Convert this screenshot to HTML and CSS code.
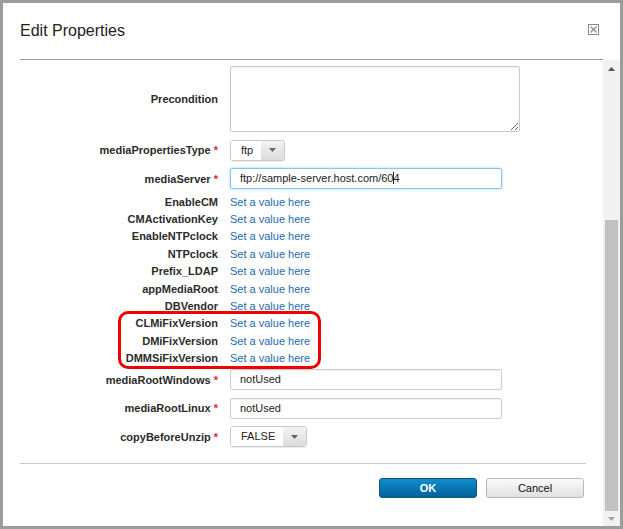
FILE: index.html
```html
<!DOCTYPE html>
<html lang="en">
<head>
<meta charset="utf-8">
<title>Edit Properties</title>
<link rel="stylesheet" href="styles.css">
</head>
<body>
<div class="dialog">
  <header class="dialog-header">
    <h1 class="dialog-title">Edit Properties</h1>
    <span class="close-btn">
      <svg width="11" height="11" viewBox="0 0 11 11"><rect x="0.5" y="0.5" width="10" height="10" fill="none" stroke="#8a8a8a"/><path d="M2.5 2.5 L8.5 8.5 M8.5 2.5 L2.5 8.5" stroke="#8a8a8a" stroke-width="1.2"/></svg>
    </span>
  </header>
  <div class="dialog-main">
    <div class="dialog-content">
      <div class="form">
        <div class="field field-tall">
          <span class="label">Precondition</span>
          <textarea class="textarea"></textarea>
        </div>
        <div class="field">
          <span class="label">mediaPropertiesType <span class="req">*</span></span>
          <div class="select select-sm">
            <span class="select-value">ftp</span>
            <span class="select-arrow"><svg width="7" height="4" viewBox="0 0 7 4"><path d="M0 0 H7 L3.5 4 Z" fill="#666"/></svg></span>
          </div>
        </div>
        <div class="field">
          <span class="label">mediaServer <span class="req">*</span></span>
          <div class="input input-focus">ftp://sample-server.host.com/60<span class="caret"></span>4</div>
        </div>
        <div class="links">
          <div class="link-row"><span class="label">EnableCM</span><span class="link">Set a value here</span></div>
          <div class="link-row"><span class="label">CMActivationKey</span><span class="link">Set a value here</span></div>
          <div class="link-row"><span class="label">EnableNTPclock</span><span class="link">Set a value here</span></div>
          <div class="link-row"><span class="label">NTPclock</span><span class="link">Set a value here</span></div>
          <div class="link-row"><span class="label">Prefix_LDAP</span><span class="link">Set a value here</span></div>
          <div class="link-row"><span class="label">appMediaRoot</span><span class="link">Set a value here</span></div>
          <div class="link-row"><span class="label">DBVendor</span><span class="link">Set a value here</span></div>
          <div class="link-row"><span class="label">CLMiFixVersion</span><span class="link">Set a value here</span></div>
          <div class="link-row"><span class="label">DMiFixVersion</span><span class="link">Set a value here</span></div>
          <div class="link-row"><span class="label">DMMSiFixVersion</span><span class="link">Set a value here</span></div>
        </div>
        <div class="field">
          <span class="label">mediaRootWindows <span class="req">*</span></span>
          <div class="input">notUsed</div>
        </div>
        <div class="field">
          <span class="label">mediaRootLinux <span class="req">*</span></span>
          <div class="input">notUsed</div>
        </div>
        <div class="field">
          <span class="label">copyBeforeUnzip <span class="req">*</span></span>
          <div class="select select-md">
            <span class="select-value">FALSE</span>
            <span class="select-arrow"><svg width="7" height="4" viewBox="0 0 7 4"><path d="M0 0 H7 L3.5 4 Z" fill="#666"/></svg></span>
          </div>
        </div>
      </div>
      <footer class="dialog-footer">
        <button class="btn btn-primary">OK</button>
        <button class="btn btn-secondary">Cancel</button>
      </footer>
    </div>
    <div class="scrollbar">
      <div class="sb-button"><svg width="7" height="4" viewBox="0 0 7 4"><path d="M3.5 0 L7 4 H0 Z" fill="#505050"/></svg></div>
      <div class="sb-track"><div class="sb-thumb"></div></div>
      <div class="sb-button sb-button-down"><svg width="7" height="4" viewBox="0 0 7 4"><path d="M0 0 H7 L3.5 4 Z" fill="#a3a3a3"/></svg></div>
    </div>
  </div>
  <div class="highlight"></div>
</div>
</body>
</html>
```

FILE: styles.css
```css
html, body {
  margin: 0;
  padding: 0;
  background: #fff;
}

body {
  font-family: "Liberation Sans", Arial, sans-serif;
  font-size: 11px;
  color: #2b2b2b;
}

.dialog {
  position: relative;
  width: 623px;
  height: 529px;
  box-sizing: border-box;
  border: 3px solid #9c9c9c;
  background: #fff;
  display: flex;
  flex-direction: column;
  overflow: hidden;
}

.dialog-header {
  height: 56px;
  margin: 0 17px 0 17px;
  border-bottom: 1px solid #9a9a9a;
  display: flex;
  align-items: center;
  justify-content: space-between;
  flex-shrink: 0;
}

.dialog-title {
  margin: 0;
  font-size: 16px;
  font-weight: normal;
  color: #222;
  line-height: 18px;
}

.close-btn {
  display: flex;
  margin-right: 4px;
  margin-top: -3px;
}

.dialog-main {
  flex: 1;
  display: flex;
  min-height: 0;
}

.dialog-content {
  flex: 1;
  display: flex;
  flex-direction: column;
}

.form {
  height: 403px;
  box-sizing: border-box;
  padding-top: 6px;
  display: flex;
  flex-direction: column;
}

.field {
  display: flex;
  align-items: center;
  gap: 12px;
  margin-bottom: 7.5px;
}

.label {
  width: 215px;
  flex-shrink: 0;
  text-align: right;
  font-weight: bold;
  white-space: nowrap;
  color: #2b2b2b;
}

.req {
  color: #e0262b;
}

.textarea {
  width: 290px;
  height: 66px;
  box-sizing: border-box;
  border: 1px solid #c9c9c9;
  border-radius: 2px;
  box-shadow: inset 0 1px 1px rgba(0, 0, 0, 0.06);
  margin: 0;
  padding: 4px;
  font-family: inherit;
  font-size: 11px;
}

.input {
  width: 272px;
  height: 21px;
  box-sizing: border-box;
  border: 1px solid #cccccc;
  border-radius: 2px;
  box-shadow: inset 0 1px 1px rgba(0, 0, 0, 0.05);
  padding-left: 9px;
  line-height: 19px;
  color: #222;
}

.input-focus {
  border-color: #86c5ec;
  box-shadow: 0 0 3px rgba(82, 168, 236, 0.55);
}

.caret {
  display: inline-block;
  width: 1px;
  height: 12px;
  background: #222;
  vertical-align: -2px;
  margin-right: -1px;
}

.select {
  height: 21px;
  box-sizing: border-box;
  border: 1px solid #c9c9c9;
  border-radius: 3px;
  box-shadow: 0 1px 1px rgba(0, 0, 0, 0.08);
  display: flex;
  overflow: hidden;
  color: #222;
}

.select-sm {
  width: 55px;
}

.select-md {
  width: 77px;
}

.select-value {
  flex: 1;
  padding-left: 10px;
  line-height: 19px;
  background: #fff;
}

.select-arrow {
  width: 23px;
  display: flex;
  align-items: center;
  justify-content: center;
  background: linear-gradient(#f3f3f3, #dcdcdc);
}

.links {
  display: flex;
  flex-direction: column;
  margin: -3.5px 0 2.3px;
}

.link-row {
  height: 17.4px;
  display: flex;
  align-items: center;
  gap: 12px;
}

.link {
  color: #1d6bb4;
  cursor: pointer;
}

.dialog-footer {
  flex: 1;
  margin: 0 17px;
  border-top: 1px solid #c8c8c8;
  padding: 14px 2px 0 0;
  display: flex;
  justify-content: flex-end;
  align-items: flex-start;
  gap: 9px;
}

.btn {
  width: 98px;
  height: 20px;
  box-sizing: border-box;
  border-radius: 3px;
  font-family: inherit;
  font-size: 11px;
  padding: 0;
  margin: 0;
  cursor: pointer;
}

.btn-primary {
  width: 98px;
  border: 1px solid #0a5785;
  background: linear-gradient(#118dcf, #04619a);
  color: #fff;
  font-weight: bold;
}

.btn-secondary {
  border: 1px solid #b9b9b9;
  background: linear-gradient(#fafafa, #e1e1e1);
  color: #111;
}

.scrollbar {
  width: 17px;
  flex-shrink: 0;
  background: #f1f1f1;
  display: flex;
  flex-direction: column;
}

.sb-button {
  height: 17px;
  display: flex;
  align-items: center;
  justify-content: center;
}

.sb-button-down {
  height: 15px;
}

.sb-track {
  flex: 1;
  padding: 0 2px;
}

.sb-thumb {
  margin-top: 143px;
  height: 291px;
  background: #c1c1c1;
}

.highlight {
  position: absolute;
  left: 115px;
  top: 308px;
  width: 203px;
  height: 58px;
  box-sizing: border-box;
  border: 3px solid #f00000;
  border-radius: 10px;
  pointer-events: none;
}
```
